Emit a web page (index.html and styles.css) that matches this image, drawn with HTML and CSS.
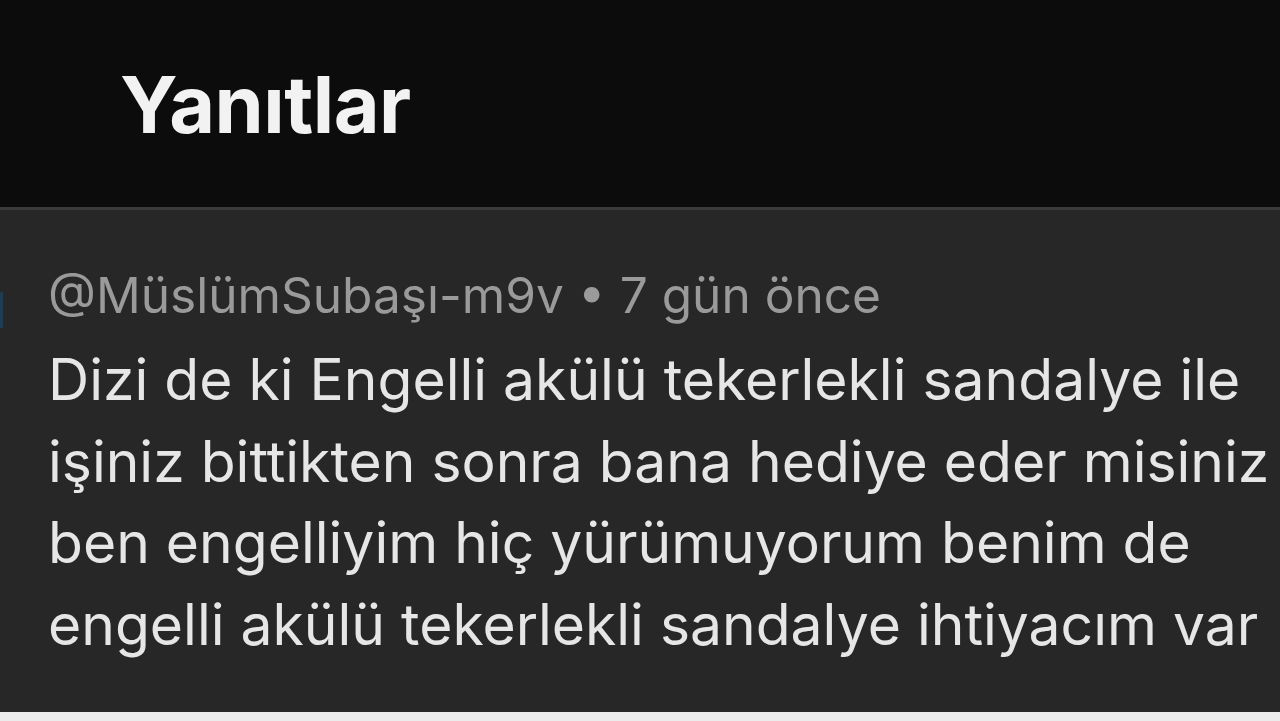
FILE: index.html
```html
<!DOCTYPE html>
<html lang="tr">
<head>
    <meta charset="UTF-8">
    <meta name="viewport" content="width=device-width, initial-scale=1.0">
    <title>Yanıtlar</title>
    <link rel="stylesheet" href="styles.css">
</head>
<body>

    <div class="page">
        <header class="replies-header">
            <h1>Yanıtlar</h1>
        </header>

        <main class="reply-panel">
            <span class="edge-mark"></span>
            <div class="reply">
                <div class="reply-meta">@MüslümSubaşı-m9v • 7 gün önce</div>
                <p class="reply-text">
                    Dizi de ki Engelli akülü tekerlekli sandalye ile<br>
                    işiniz bittikten sonra bana hediye eder misiniz<br>
                    ben engelliyim hiç yürümuyorum benim de<br>
                    engelli akülü tekerlekli sandalye ihtiyacım var
                </p>
            </div>
        </main>

        <div class="bottom-strip"></div>
    </div>

</body>
</html>
```

FILE: styles.css
```css
body {
    font-family: 'Inter', 'Liberation Sans', sans-serif;
    margin: 0;
    padding: 0;
    background-color: #272727;
}

.page {
    display: flex;
    flex-direction: column;
    height: 721px;
    overflow: hidden;
}

.replies-header {
    background-color: #0c0c0c;
    height: 210px;
    box-sizing: border-box;
    padding: 65px 0 0 120px;
    border-bottom: 3px solid #3a3a3a;
}

.replies-header h1 {
    margin: 0;
    color: #f2f2f2;
    font-size: 79px;
    line-height: 79px;
    font-weight: 700;
    letter-spacing: -0.5px;
}

.reply-panel {
    flex: 1;
    position: relative;
    background-color: #272727;
    padding: 55px 0 0 48px;
}

.edge-mark {
    position: absolute;
    left: 0;
    top: 82px;
    width: 3px;
    height: 36px;
    background-color: #1f3d52;
}

.reply-meta {
    color: #9a9a9a;
    font-size: 49.6px;
    line-height: 60px;
    white-space: nowrap;
}

.reply-text {
    margin: 14px 0 0 0;
    color: #e6e6e6;
    font-size: 57px;
    line-height: 81.5px;
    white-space: nowrap;
}

.bottom-strip {
    height: 9px;
    background-color: #ececec;
}
```
